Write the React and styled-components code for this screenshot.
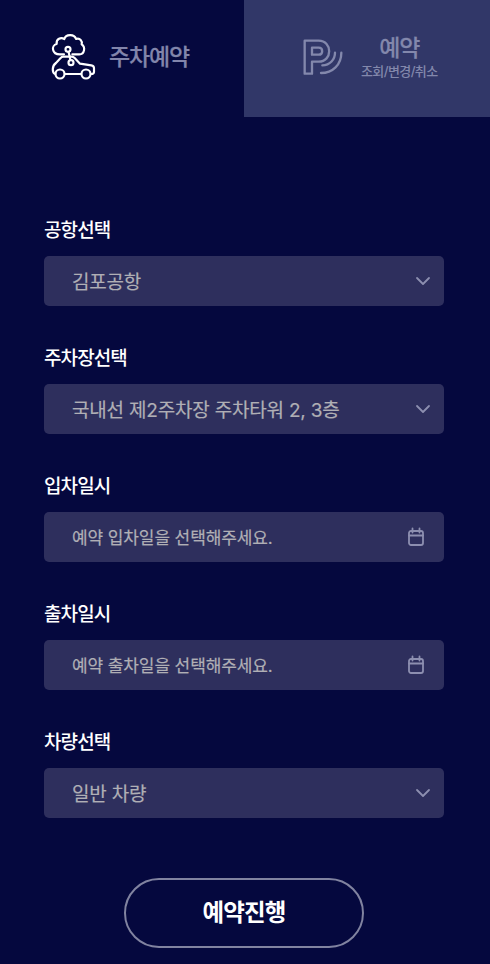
import React from "react";
import styled, { createGlobalStyle } from "styled-components";

const GlobalStyle = createGlobalStyle`
  * {
    box-sizing: border-box;
  }
  body {
    margin: 0;
    background-color: #05083e;
    font-family: Inter, "Noto Sans CJK KR", sans-serif;
  }
`;

const Page = styled.div`
  width: 490px;
  height: 964px;
  overflow: hidden;
  background-color: #05083e;
`;

const Tabs = styled.nav`
  display: grid;
  grid-template-columns: 244px 246px;
  height: 117px;
`;

const Tab = styled.a`
  display: flex;
  align-items: flex-start;
  padding: ${props => (props.$active ? "33px 0 0 50px" : "34px 0 0 58px")};
  background-color: ${props => (props.$active ? "transparent" : "#313768")};
  color: ${props => (props.$active ? "#8285ab" : "#8388ac")};
`;

const TabIcon = styled.svg`
  flex: none;
  fill: none;
  stroke: currentColor;
  stroke-linecap: round;
  stroke-linejoin: round;
`;

const CarIcon = styled(TabIcon)`
  color: #fff;
  margin-right: 13px;
`;

const ParkingIcon = styled(TabIcon)`
  margin: 4px 17px 0 0;
`;

const TabText = styled.div`
  display: flex;
  flex-direction: column;
  align-items: center;
  padding-top: ${props => props.$top}px;
`;

const TabTitle = styled.strong`
  font-size: 23px;
  font-weight: 500;
  line-height: 26px;
  letter-spacing: -1.2px;
  white-space: nowrap;
  -webkit-text-stroke: 0.2px currentColor;
`;

const TabSub = styled.span`
  font-size: 13px;
  font-weight: 500;
  line-height: 20px;
  letter-spacing: -0.6px;
  white-space: nowrap;
`;

const Form = styled.form`
  display: flex;
  flex-direction: column;
  padding: 97px 46px 0 44px;
`;

const Field = styled.div`
  height: 128px;
`;

const Label = styled.label`
  display: block;
  height: 42px;
  padding-top: 2px;
  color: #fff;
  font-size: 19px;
  font-weight: 500;
  line-height: 30px;
  letter-spacing: -0.9px;
`;

const Control = styled.div`
  display: flex;
  align-items: center;
  justify-content: space-between;
  height: 50px;
  padding: 0 ${props => (props.$date ? 18 : 13)}px 0 28px;
  border-radius: 5px;
  background-color: #2e2f5d;
  color: #b0afb5;
  font-size: ${props => (props.$date ? 17 : 19)}px;
  letter-spacing: ${props => (props.$date ? -0.1 : -0.2)}px;
  white-space: nowrap;
`;

const Value = styled.span`
  padding-bottom: 1px;
  -webkit-text-stroke: 0.2px currentColor;
`;

const ControlIcon = styled.svg`
  flex: none;
  fill: none;
  stroke: #8d8fb0;
  stroke-width: 1.8;
  stroke-linecap: round;
  stroke-linejoin: round;
`;

const Submit = styled.button`
  align-self: center;
  width: 240px;
  height: 70px;
  margin-top: 24px;
  padding: 0 0 5px;
  border: 2px solid #8183a0;
  border-radius: 35px;
  background: transparent;
  color: #fff;
  font-family: inherit;
  font-size: 23.5px;
  font-weight: 700;
  letter-spacing: -0.9px;
`;

const fields = [
  { label: "공항선택", value: "김포공항" },
  { label: "주차장선택", value: "국내선 제2주차장 주차타워 2, 3층" },
  { label: "입차일시", value: "예약 입차일을 선택해주세요.", date: true },
  { label: "출차일시", value: "예약 출차일을 선택해주세요.", date: true },
  { label: "차량선택", value: "일반 차량" }
];

function Chevron() {
  return (
    <ControlIcon width="16" height="10" viewBox="0 0 16 10">
      <path d="M2 2l6 6 6-6" />
    </ControlIcon>
  );
}

function Calendar() {
  return (
    <ControlIcon width="20" height="20" viewBox="0 0 20 20">
      <rect x="3" y="4" width="14" height="14" rx="2" />
      <path d="M3 8.5h14M6.5 1.5v4M13.5 1.5v4" />
    </ControlIcon>
  );
}

function App() {
  return (
    <Page>
      <GlobalStyle />
      <Tabs>
        <Tab $active>
          <CarIcon width="46" height="48" viewBox="0 0 138 144" strokeWidth="6.5">
            <path d="M42 64H30C5 64 3 37 20 33C18 17 33 12 43 18C47 3 73 2 78 18C90 14 98 24 95 34C107 42 104 64 88 64H67" />
            <path d="M16 123C5 119 6 98 18 90L31 76Q35 71 40 71H65Q70 71 74 75L90 92L124 97Q132 98 132 106V117Q132 123 123 123M45 123H93" />
            <circle cx="30" cy="123" r="13.5" />
            <circle cx="108" cy="123" r="13.5" />
            <circle cx="54" cy="49" r="7.5" />
            <circle cx="63" cy="89" r="7.5" />
            <path d="M56 58L61 80" />
          </CarIcon>
          <TabText $top={11}>
            <TabTitle>주차예약</TabTitle>
          </TabText>
        </Tab>
        <Tab>
          <ParkingIcon width="42" height="38" viewBox="0 0 126 114" strokeWidth="7">
            <path d="M8 8H50C92 8 92 71 50 71H30V107H8Z" />
            <path d="M30 29H50C64 29 64 50 50 50H30Z" />
            <path d="M99 44C99 64 84 82 61 82M118 44C118 80 92 105 57 105" />
          </ParkingIcon>
          <TabText $top={1}>
            <TabTitle>예약</TabTitle>
            <TabSub>조회/변경/취소</TabSub>
          </TabText>
        </Tab>
      </Tabs>
      <Form>
        {fields.map(field => (
          <Field key={field.label}>
            <Label>{field.label}</Label>
            <Control $date={field.date}>
              <Value>{field.value}</Value>
              {field.date ? <Calendar /> : <Chevron />}
            </Control>
          </Field>
        ))}
        <Submit type="button">예약진행</Submit>
      </Form>
    </Page>
  );
}

export default App;
